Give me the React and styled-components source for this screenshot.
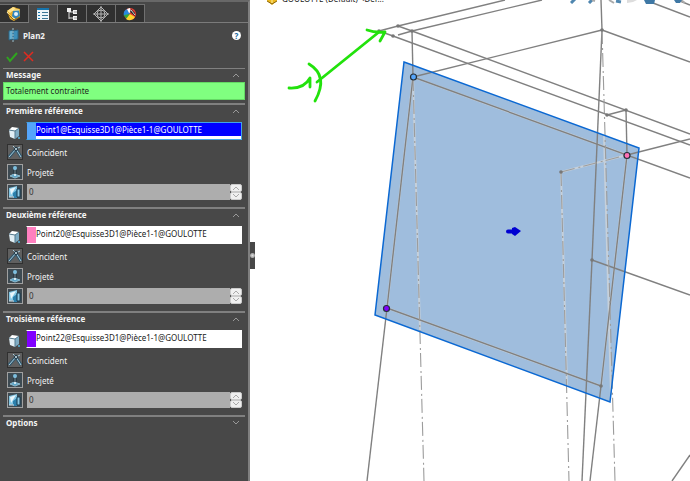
import React, { useState } from 'react'
import styled, { createGlobalStyle } from 'styled-components'

const references = [
  { id: 'ref1', title: 'Première référence', value: 'Point1@Esquisse3D1@Pièce1-1@GOULOTTE', color: '#55a5fb', active: true },
  { id: 'ref2', title: 'Deuxième référence', value: 'Point20@Esquisse3D1@Pièce1-1@GOULOTTE', color: '#ff80c0' },
  { id: 'ref3', title: 'Troisième référence', value: 'Point22@Esquisse3D1@Pièce1-1@GOULOTTE', color: '#8000ff' },
]

// solid edges of the wireframe: x1 y1 x2 y2
const edges = [
  [379, 31, 398, 26],
  [398, 26, 505, 0],
  [398, 26, 412, 31],
  [379, 31, 393, 36],
  [398, 35, 412, 31],
  [412, 31, 542, 0],
  [412, 31, 690, 134],
  [393, 36, 690, 145],
  [412, 31, 413, 77],
  [413, 77, 602, 30],
  [602, 30, 690, 62],
  [602, 30, 601, 0],
  [602, 30, 592, 260],
  [592, 260, 582, 481],
  [413, 77, 690, 178],
  [413, 77, 387, 308],
  [387, 308, 367, 481],
  [387, 308, 601, 386],
  [627, 155, 601, 386],
  [601, 386, 590, 481],
  [626, 110, 627, 155],
  [607, 115, 626, 110],
  [627, 155, 690, 139],
  [592, 260, 690, 295],
  [653, 3, 690, 17],
  [680, 1, 690, 5],
  [672, 481, 690, 455],
]

const dashed = [
  [413, 77, 424, 481],
  [602, 30, 615, 481],
  [561, 172, 569, 481],
  [561, 172, 627, 155],
]

const vertices = [
  [398, 26], [393, 36], [412, 31], [379, 31], [602, 30], [607, 115], [626, 110], [561, 172], [592, 260], [601, 386],
]

const PartIcon = () => (
  <svg width="16" height="16" viewBox="0 0 16 16" aria-hidden="true">
    <path d="M1 5l6-4 7 2v8l-6 4-4-2z" fill="#e6ae2d" />
    <path d="M1 5l6-4 3 1-6 5z" fill="#ffe28a" />
    <path d="M7 5l6-1 1 6-5 3-3-3z" fill="#3386bd" />
    <path d="M1 6l4 5 4 2M6 4l7 0" fill="none" stroke="#fff1b5" />
    <circle cx="10" cy="8" r="2" fill="#e9f5fb" />
    <path d="M2 8l6 6 6-3" fill="none" stroke="#976813" />
  </svg>
)

const DocumentIcon = () => (
  <svg width="12" height="12" viewBox="0 0 12 12" aria-hidden="true">
    <path d="M1 3l5-2 5 2v5l-5 4-5-4z" fill="#edb91f" />
    <path d="M1 8l5 3 5-3" fill="none" stroke="#8c6710" />
    <path d="M6 5v5" stroke="#fff0a0" />
  </svg>
)

const ListIcon = () => (
  <svg width="14" height="14" viewBox="0 0 14 14" aria-hidden="true">
    <path fill="#eef6fa" d="M1 1h12v12H1z" />
    <path fill="#1675ad" d="M1 1h12v2H1zM2 5h2v1H2zM2 8h2v1H2zM2 11h2v1H2z" />
    <path fill="#3b7797" d="M6 5h6v1H6zM6 8h6v1H6zM6 11h6v1H6z" />
  </svg>
)

const TreeIcon = () => (
  <svg width="14" height="14" viewBox="0 0 14 14" aria-hidden="true">
    <path d="M4 2v10M4 5h5M4 11h5" stroke="#dedede" fill="none" />
    <path d="M2 1h4v4H2zM8 3h4v4H8zM8 9h4v4H8z" fill="#f2f2f2" />
    <path d="M9 5h3M9 11h3" stroke="#999" />
  </svg>
)

const TargetIcon = () => (
  <svg width="16" height="16" viewBox="0 0 16 16" fill="none" stroke="#b4b4b4" aria-hidden="true">
    <path d="M8 1l7 7-7 7-7-7zM8 0v16M0 8h16" />
    <circle cx="8" cy="8" r="4" />
  </svg>
)

const AppearanceIcon = () => (
  <svg width="14" height="14" viewBox="0 0 14 14" aria-hidden="true">
    <circle cx="7" cy="7" r="6" fill="#e83c33" />
    <path d="M7 7L1 9a6 6 0 0 1 3-7z" fill="#2789df" />
    <path d="M7 7L1 8a6 6 0 0 0 3 4z" fill="#35a83b" />
    <path d="M7 7l-4 5a6 6 0 0 0 9-2z" fill="#ffd52e" />
    <path d="M4 2l3-1 1 4-2 1z" fill="#fff" />
    <path d="M8 2l4 4 0 3-5-4z" fill="#232323" />
    <path d="M8 3l4 5" stroke="#d7d7d7" />
  </svg>
)

const PlaneIcon = () => (
  <svg width="12" height="14" viewBox="0 0 12 14" aria-hidden="true">
    <path d="M1 3l4-1v9l-4 1z" fill="#65afd1" />
    <path d="M5 3l5-1v9l-5 1z" fill="#3d8fba" />
    <path d="M1 3l4-1v9l-4 1zM5 3l5-1v9l-5 1" fill="none" stroke="#2b6584" />
    <path d="M5 0v14" stroke="#9dbdca" strokeDasharray="2 1" />
  </svg>
)

const CubeIcon = () => (
  <svg width="14" height="14" viewBox="0 0 14 14" aria-hidden="true">
    <path d="M1 4l3-3 7 1-3 4z" fill="#fff" />
    <path d="M1 4l6 1v8l-5-2z" fill="#e2eff5" />
    <path d="M7 5l4-3v8l-4 3z" fill="#7eacc4" />
    <path d="M1 4l6 1 4-3M7 5v8" fill="none" stroke="#54798d" />
    <circle cx="11" cy="12" r="1" fill="#54b4de" />
  </svg>
)

const CoincidentIcon = () => (
  <svg width="14" height="14" viewBox="0 0 14 14" aria-hidden="true">
    <path d="M1 12L8 4l5 8" fill="none" stroke="#31566b" strokeWidth="3" />
    <path d="M1 12L8 4l5 8M5 1l3 3 4-2" fill="none" stroke="#a9cfe0" />
    <circle cx="8" cy="4" r="2" fill="#1f3541" />
    <circle cx="8" cy="4" r="1" fill="#d8edf5" />
  </svg>
)

const ProjectIcon = () => (
  <svg width="14" height="14" viewBox="0 0 14 14" aria-hidden="true">
    <path d="M2 11l4-2 6 2-5 2z" fill="#5ba4c8" stroke="#8dbbcf" />
    <path d="M7 3v8" stroke="#d2e5ed" />
    <circle cx="7" cy="3" r="2" fill="#7cbfdf" />
    <path d="M5 6h4M5 8h4" stroke="#182c38" />
    <circle cx="7" cy="10" r="1" fill="#e2f1f7" />
  </svg>
)

const CountIcon = () => (
  <svg width="14" height="14" viewBox="0 0 14 14" aria-hidden="true">
    <path d="M1 3l8-2v10l-8 1z" fill="#83c7e5" />
    <path d="M2 4l6-2-5 8z" fill="#e9f6fc" />
    <path d="M5 8l4-3v8H5z" fill="#2c80ac" />
    <path d="M9 4h3v8H9z" fill="#8bc9e5" stroke="#173b50" />
    <path d="M1 12h5" stroke="#dfe7eb" />
  </svg>
)

const Chevron = ({ down }) => (
  <svg width="8" height="6" viewBox="0 0 8 6" fill="none" stroke="currentColor" aria-hidden="true">
    <path d={down ? 'M1 1l3 3 3-3' : 'M1 5l3-3 3 3'} />
  </svg>
)

const tabs = [
  { name: 'Arbre de création', icon: <PartIcon /> },
  { name: 'Propriétés', icon: <ListIcon /> },
  { name: 'Configurations', icon: <TreeIcon /> },
  { name: 'Cotations', icon: <TargetIcon /> },
  { name: 'Apparences', icon: <AppearanceIcon /> },
]

function Reference({ item }) {
  const [count, setCount] = useState(0)
  return (
    <Section>
      <SectionHeader type="button">
        {item.title}
        <Chevron />
      </SectionHeader>
      <Rows>
        <FieldRow>
          <CubeIcon />
          <Selection $active={item.active}>
            <Swatch $color={item.color} />
            <SelectionInput
              aria-label={item.title}
              $active={item.active}
              defaultValue={item.value}
            />
          </Selection>
        </FieldRow>
        <OptionRow>
          <ToolButton id={`${item.id}-coincident`} type="button" $pressed><CoincidentIcon /></ToolButton>
          <label htmlFor={`${item.id}-coincident`}>Coïncident</label>
        </OptionRow>
        <OptionRow>
          <ToolButton id={`${item.id}-project`} type="button"><ProjectIcon /></ToolButton>
          <label htmlFor={`${item.id}-project`}>Projeté</label>
        </OptionRow>
        <OptionRow>
          <ToolButton type="button" aria-label="Décalage"><CountIcon /></ToolButton>
          <NumberBox>
            <input
              aria-label="Nombre de plans"
              value={count}
              onChange={(e) => setCount(Number(e.target.value) || 0)}
            />
            <Spinner>
              <button type="button" aria-label="Plus" onClick={() => setCount(count + 1)}><Chevron /></button>
              <button type="button" aria-label="Moins" onClick={() => setCount(Math.max(0, count - 1))}><Chevron down /></button>
            </Spinner>
          </NumberBox>
        </OptionRow>
      </Rows>
    </Section>
  )
}

function Model() {
  return (
    <Drawing viewBox="250 0 440 481" preserveAspectRatio="xMinYMin slice" aria-label="Modèle 3D">
      <polygon points="404,62 639,148 610,402 375,315" fill="#9fbddd" />
      {/* light halo under the edges that cross the plane */}
      <path
        d="M413 77L387 308L601 386L627 155ZM413 77L420 330M561 172L567 386M604 135L611 395M561 172L627 155"
        fill="none"
        stroke="#c6d0da"
        strokeWidth="2"
      />
      <g stroke="#808080" strokeWidth="1.4">
        {edges.map(([x1, y1, x2, y2], i) => (
          <line key={i} x1={x1} y1={y1} x2={x2} y2={y2} />
        ))}
      </g>
      <g stroke="#9c9c9c" strokeWidth="1.1" strokeDasharray="14 4 2 3">
        {dashed.map(([x1, y1, x2, y2], i) => (
          <line key={i} x1={x1} y1={y1} x2={x2} y2={y2} />
        ))}
      </g>
      <polygon points="404,62 639,148 610,402 375,315" fill="none" stroke="#0b68d2" strokeWidth="1.5" />
      {vertices.map(([cx, cy]) => (
        <circle key={`${cx}-${cy}`} cx={cx} cy={cy} r="1.8" fill="#777" />
      ))}
      <g stroke="#25303a" strokeWidth="1.2">
        <circle cx="413.5" cy="77" r="3" fill="#55a5fb" />
        <circle cx="627" cy="155.5" r="3" fill="#ff70b4" />
        <circle cx="386.5" cy="308.5" r="3" fill="#8000ff" />
      </g>
      <path d="M508 231.500h8" stroke="#0000d2" strokeWidth="4" strokeLinecap="round" />
      <path d="M512 228l3-1 6 4-6 5-3-2z" fill="#0000d2" />
      {/* hand-drawn mark */}
      <g fill="none" stroke="#22e20c" strokeWidth="2.8" strokeLinecap="round" strokeLinejoin="round">
        <path d="M317 82L379 32" />
        <path d="M367 30q8 3 18 2l-5 9" />
        <path d="M289 88q15 1 21-10v9" />
        <path d="M309 64q20 12 6 37" />
      </g>
    </Drawing>
  )
}

export default function App() {
  return (
    <>
      <GlobalStyle />
      <Window>
        <Panel>
          <Tabs>
            {tabs.map((tab, i) => (
              <Tab key={tab.name} type="button" aria-label={tab.name} $selected={i === 1}>{tab.icon}</Tab>
            ))}
          </Tabs>
          <Title>
            <PlaneIcon />
            <h1>Plan2</h1>
            <Help type="button">?</Help>
          </Title>
          <Actions>
            <button type="button" aria-label="Valider">
              <svg width="12" height="12" viewBox="0 0 12 12"><path d="M1 6l3 4 7-8" fill="none" stroke="#2fa51f" strokeWidth="2" /></svg>
            </button>
            <button type="button" aria-label="Annuler">
              <svg width="12" height="12" viewBox="0 0 12 12"><path d="M2 1l9 9M11 1l-9 9" fill="none" stroke="#e02b20" strokeWidth="1.5" /></svg>
            </button>
          </Actions>
          <Section $thin>
            <SectionHeader type="button">
              Message
              <Chevron />
            </SectionHeader>
            <Message>Totalement contrainte</Message>
          </Section>
          {references.map((item) => (
            <Reference key={item.id} item={item} />
          ))}
          <Section>
            <SectionHeader type="button">
              Options
              <Chevron down />
            </SectionHeader>
          </Section>
        </Panel>
        <Viewport>
          <Model />
          <DocumentBar>
            <DocumentIcon />
            <span>GOULOTTE (Default) &lt;Def...</span>
          </DocumentBar>
          <ViewTools>
            <svg width="120" height="4" viewBox="0 0 120 4" aria-hidden="true">
              <path d="M1 3l4-4M19 3l4-4M46 1l5 1" stroke="#4f86af" strokeWidth="3" />
              <path d="M39 0l5 3M22 0l3 1M111 0l4 3" stroke="#aaa" strokeWidth="2" />
              <path d="M57 0h10l-4 2-6 1z" fill="#ddd" />
              <path d="M74 0h11l-1 4h-8z" fill="#3f78a5" />
              <path d="M104 0h8l-2 3h-4z" fill="#3f78a5" />
            </svg>
          </ViewTools>
          <Handle type="button" aria-label="Réduire le panneau" />
        </Viewport>
      </Window>
    </>
  )
}

const GlobalStyle = createGlobalStyle`
  * {
    box-sizing: border-box;
  }
  body {
    margin: 0;
    background: #fff;
  }
  body, button, input {
    font-family: 'Noto Sans', 'Open Sans', sans-serif;
    font-size: 8px;
  }
  button, input {
    border: 0;
    padding: 0;
    margin: 0;
    min-width: 0;
  }
  svg {
    display: block;
    flex: none;
  }
`

const Window = styled.main`
  display: grid;
  grid-template-columns: 250px 1fr;
  min-height: 100vh;
`

const Panel = styled.aside`
  background: #484848;
  color: #f2f2f2;
  border-top: 2px solid #686868;
  border-right: 2px solid #808080;
`

const Tabs = styled.nav`
  display: flex;
  height: 21px;
  padding-top: 2px;
  border-bottom: 1px solid #7b7b7b;
`

const Tab = styled.button`
  display: flex;
  align-items: center;
  justify-content: center;
  width: 29px;
  height: ${(props) => (props.$selected ? '19px' : '18px')};
  background: ${(props) => (props.$selected ? '#484848' : '#303030')};
  border: 1px solid #707070;
  border-left: 0;
  border-bottom: 0;
`

const Title = styled.header`
  display: flex;
  align-items: center;
  height: 24px;
  padding: 0 7px 0 8px;
  gap: 3px;
  h1 {
    margin: 0;
    flex: 1;
    font-size: 8px;
    font-weight: 700;
  }
`

const Help = styled.button`
  width: 9px;
  height: 9px;
  border-radius: 50%;
  background: #fff;
  color: #17679c;
  font-weight: 700;
  line-height: 9px;
`

const Actions = styled.div`
  display: flex;
  align-items: center;
  gap: 4px;
  height: 21px;
  padding: 0 6px 2px;
  button {
    background: none;
  }
`

const Section = styled.section`
  margin: 0 3px;
  border-top: ${(props) => (props.$thin ? '1px' : '2px')} solid #808080;
`

const SectionHeader = styled.button`
  display: flex;
  align-items: center;
  justify-content: space-between;
  width: 100%;
  height: 13px;
  padding: 0 5px 1px 3px;
  background: none;
  color: #f5f5f5;
  font-weight: 700;
  line-height: 12px;
  svg {
    color: #989898;
  }
`

const Message = styled.p`
  margin: 0 0 3px;
  height: 18px;
  padding: 0 2px;
  border: 1px solid #64d964;
  background: #80ff80;
  color: #202820;
  line-height: 16px;
`

const Rows = styled.div`
  display: flex;
  flex-direction: column;
  gap: 4px;
  padding: 4px 3px 7px 4px;
`

const FieldRow = styled.div`
  display: grid;
  grid-template-columns: 14px 1fr;
  align-items: end;
  gap: 4px;
  padding-left: 1px;
`

const Selection = styled.div`
  display: flex;
  height: 18px;
  background: #fff;
  border: 1px solid ${(props) => (props.$active ? '#42a5e8' : '#fff')};
  border-left-color: transparent;
  background-clip: padding-box;
`

const Swatch = styled.span`
  width: 9px;
  background: ${(props) => props.$color};
`

const SelectionInput = styled.input`
  flex: 1;
  height: 13px;
  background: ${(props) => (props.$active ? '#0000ff' : '#fff')};
  color: ${(props) => (props.$active ? '#fff' : '#202020')};
  outline: 0;
`

const OptionRow = styled.div`
  display: flex;
  align-items: center;
  gap: 4px;
  height: 16px;
`

const ToolButton = styled.button`
  display: flex;
  align-items: center;
  justify-content: center;
  width: 16px;
  height: 16px;
  flex: none;
  background: ${(props) => (props.$pressed ? '#606060' : '#3d4a52')};
  border: 1px solid ${(props) => (props.$pressed ? '#303030' : '#a0a0a0')};
`

const NumberBox = styled.div`
  display: flex;
  flex: 1;
  height: 16px;
  input {
    flex: 1;
    padding: 0 0 2px 2px;
    background: #adadad;
    color: #333;
    outline: 0;
  }
`

const Spinner = styled.div`
  display: flex;
  flex-direction: column;
  width: 12px;
  button {
    display: flex;
    align-items: center;
    justify-content: center;
    height: 8px;
    background: #f0f0f0;
    border: 1px solid #ccc;
    border-radius: 2px;
    color: #aaa;
  }
`

const Viewport = styled.section`
  position: relative;
  overflow: hidden;
  background: #fff;
`

const Drawing = styled.svg`
  width: 100%;
  height: 100%;
`

// the document bar, view tools and handle float over the model
const DocumentBar = styled.div`
  position: absolute;
  top: -9px;
  left: 16px;
  display: flex;
  align-items: center;
  gap: 4px;
  color: #222;
  line-height: 16px;
`

const ViewTools = styled.div`
  position: absolute;
  top: 0;
  right: 0;
`

const Handle = styled.button`
  position: absolute;
  left: 0;
  top: 242px;
  width: 5px;
  height: 27px;
  background: radial-gradient(circle, #ddd 0, #aaa 2px, #484848 3px);
`
